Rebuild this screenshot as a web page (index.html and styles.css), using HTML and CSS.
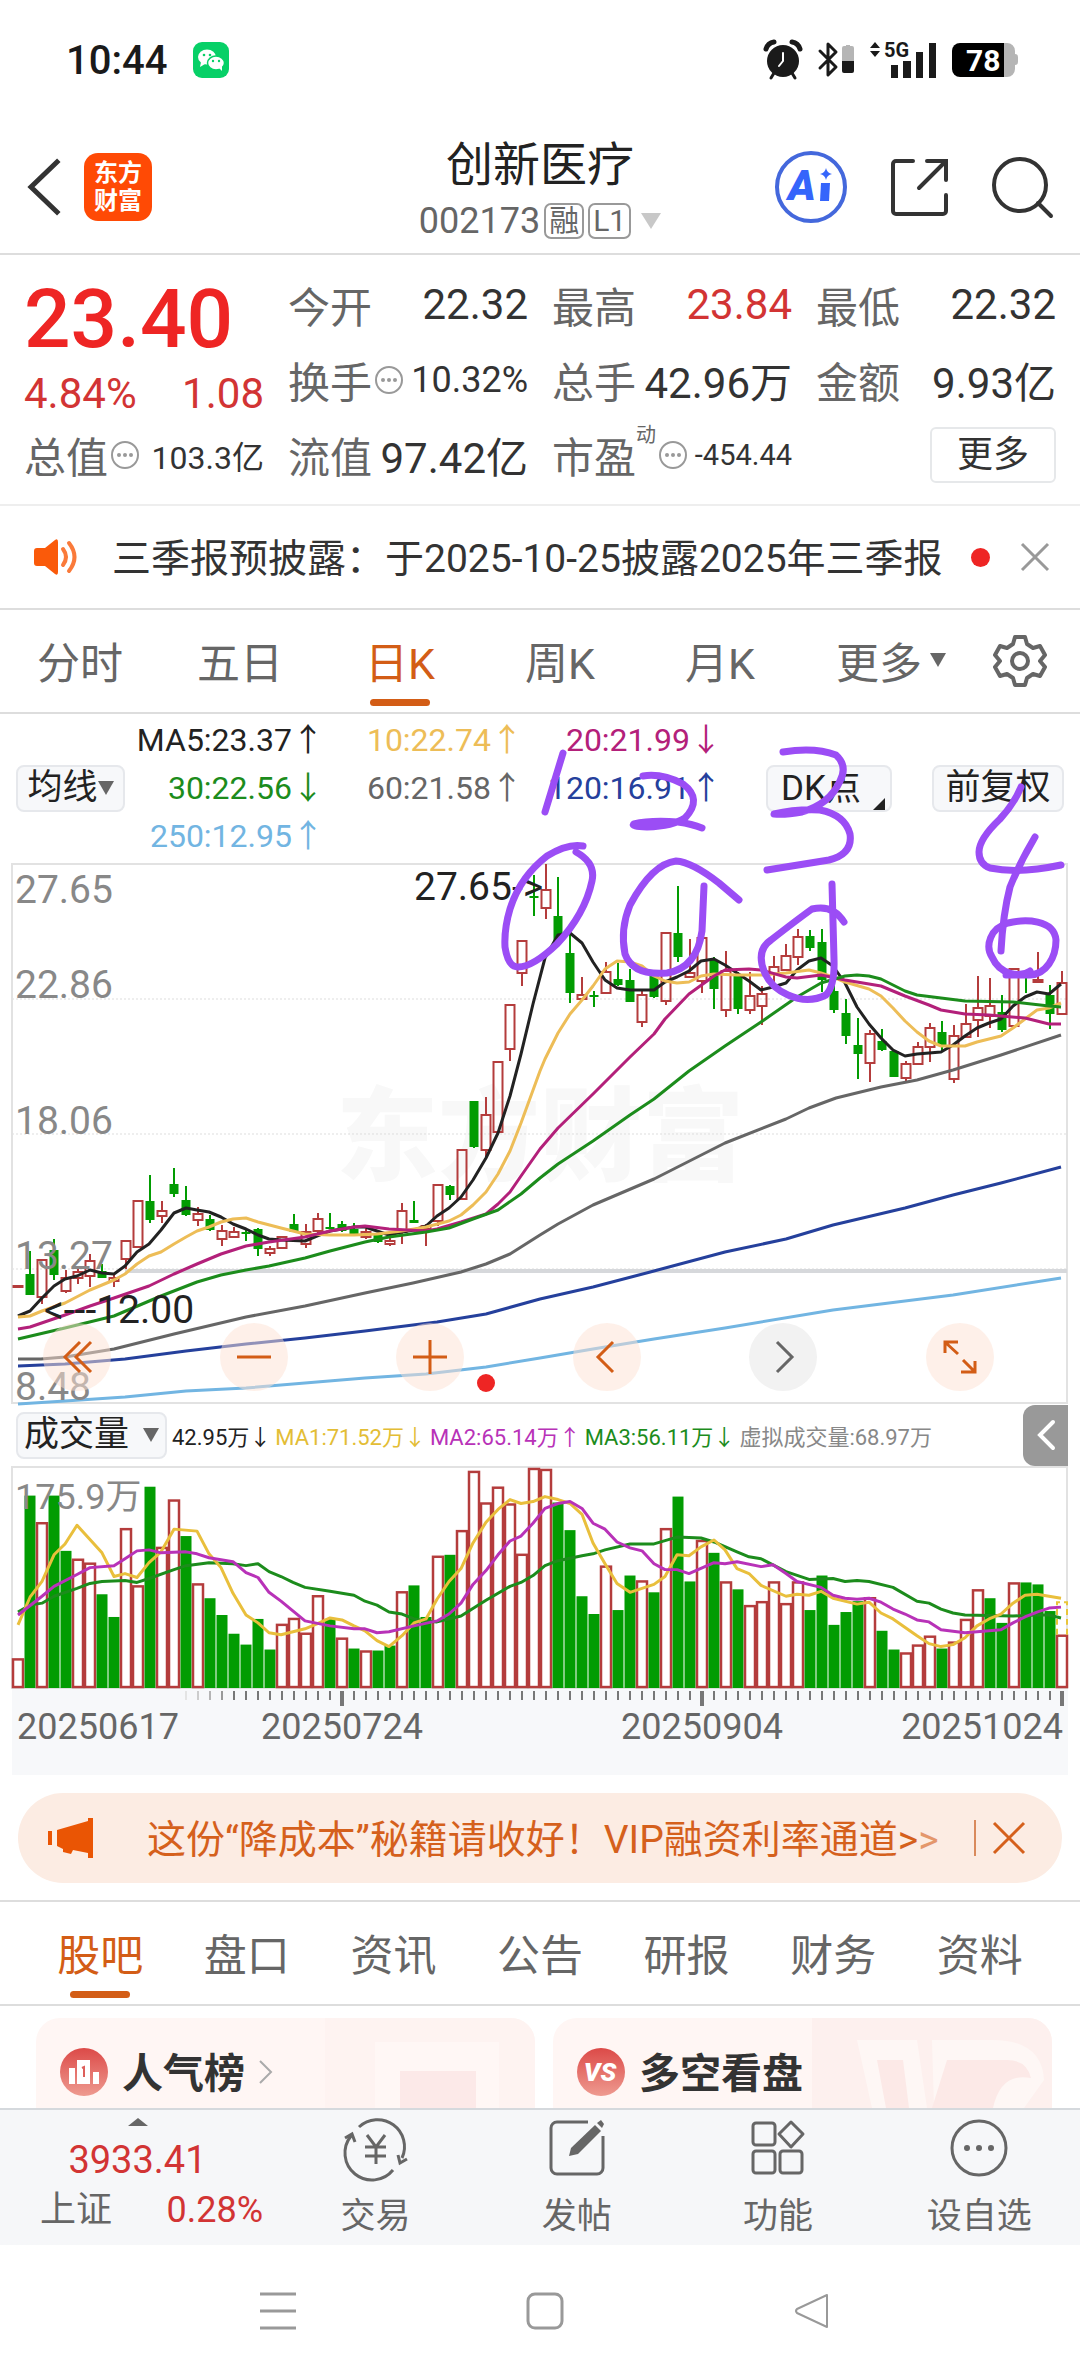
FILE: index.html
```html
<!DOCTYPE html>
<html lang="zh-CN">
<head>
    <meta charset="UTF-8">
    <meta name="viewport" content="width=device-width, initial-scale=1.0">
    <title>创新医疗 002173</title>
    <link rel="stylesheet" href="styles.css">
</head>
<body>

    <div class="status-bar">
        <span class="status-time">10:44</span>
        <svg class="wechat-icon" width="36" height="36" viewBox="0 0 36 36">
            <rect width="36" height="36" rx="9" fill="#07d067"/>
            <ellipse cx="14" cy="15" rx="9" ry="7.5" fill="#fff"/>
            <path d="M8 20l-1 5 5-3z" fill="#fff"/>
            <ellipse cx="23" cy="21" rx="8.5" ry="7" fill="#fff" stroke="#07d067" stroke-width="1.5"/>
            <path d="M26 26l3 3v-5z" fill="#fff"/>
            <g fill="#07d067"><circle cx="11" cy="13" r="1.3"/><circle cx="17" cy="13" r="1.3"/><circle cx="20" cy="19" r="1.2"/><circle cx="26" cy="19" r="1.2"/></g>
        </svg>
        <div class="status-icons">
            <svg width="38" height="40" viewBox="0 0 38 40">
                <circle cx="19" cy="21" r="16" fill="#1a1a1a"/>
                <path d="M2 9a10 10 0 0 1 8-7M36 9a10 10 0 0 0-8-7" stroke="#1a1a1a" stroke-width="5" fill="none" stroke-linecap="round"/>
                <path d="M10 33l-3 5M28 33l3 5" stroke="#1a1a1a" stroke-width="3" stroke-linecap="round"/>
                <path d="M19 13v8l-4 5" stroke="#fff" stroke-width="2" fill="none" stroke-linecap="round"/>
            </svg>
            <svg width="36" height="38" viewBox="0 0 36 38">
                <path d="M2 10l16 16-8 8V3l8 8L2 27" stroke="#1a1a1a" stroke-width="3" fill="none" stroke-linejoin="round" stroke-linecap="round"/>
                <path d="M24 7a2 2 0 0 1 2-2h2V4h4v1h2a2 2 0 0 1 2 2v13H24z" fill="#b5b5b5"/>
                <path d="M24 20h12v10a2 2 0 0 1-2 2h-8a2 2 0 0 1-2-2z" fill="#1a1a1a"/>
            </svg>
            <svg width="66" height="38" viewBox="0 0 66 38">
                <path d="M5 1l5 6H0zM5 16l5-6H0z" fill="#1a1a1a"/>
                <text x="14" y="16" class="net-label">5G</text>
                <path d="M21 24h7v13h-7zM33 20h8v17h-8zM46 11h7v26h-7zM59 2h7v35h-7z" fill="#1a1a1a"/>
            </svg>
            <svg width="66" height="34" viewBox="0 0 66 34">
                <path d="M52 0h3a8 8 0 0 1 8 8v3q3 0 3 3v5q0 3-3 3v4a8 8 0 0 1-8 8h-3z" fill="#b5b5b5"/>
                <path d="M8 0h44v34H8a8 8 0 0 1-8-8V8a8 8 0 0 1 8-8z"/>
                <text x="14" y="28" class="battery-label">78</text>
            </svg>
        </div>
    </div>

    <header class="header">
        <div class="header-left">
            <button class="icon-btn" aria-label="返回">
                <svg width="34" height="56" viewBox="0 0 34 56"><path d="M31 3L5 28l26 25" fill="none" stroke="#333" stroke-width="5" stroke-linecap="square"/></svg>
            </button>
            <div class="logo"><span>东方</span><span>财富</span></div>
        </div>
        <div class="stock-title">
            <h1>创新医疗</h1>
            <div class="stock-code">
                <span>002173</span><span class="badge">融</span><span class="badge">L1</span>
                <svg class="code-caret" width="20" height="16" viewBox="0 0 20 16"><path d="M0 0h20L10 16z" fill="#c8c8c8"/></svg>
            </div>
        </div>
        <div class="header-right">
            <button class="icon-btn" aria-label="AI">
                <svg width="74" height="74" viewBox="0 0 74 74">
                    <circle cx="37" cy="37" r="34" fill="none" stroke="#4468dc" stroke-width="4"/>
                    <text x="14" y="50" class="ai-label">A</text>
                    <path d="M47 33h9l-1 18h-9z" fill="#3565fb"/>
                    <path d="M52 18q1 5 6 6-5 1-6 6-1-5-6-6 5-1 6-6z" fill="#3565fb"/>
                </svg>
            </button>
            <button class="icon-btn" aria-label="分享">
                <svg width="60" height="60" viewBox="0 0 60 60">
                    <path d="M23 4H6a3 3 0 0 0-3 3v47a3 3 0 0 0 3 3h47a3 3 0 0 0 3-3V38M37 4h19v19M55 5L29 31" fill="none" stroke="#333" stroke-width="4" stroke-linecap="round"/>
                </svg>
            </button>
            <button class="icon-btn" aria-label="搜索">
                <svg width="62" height="62" viewBox="0 0 62 62">
                    <circle cx="28" cy="29" r="26" fill="none" stroke="#333" stroke-width="4"/>
                    <path d="M46 47l13 13" stroke="#333" stroke-width="4" stroke-linecap="round"/>
                </svg>
            </button>
        </div>
    </header>

    <section class="quote">
        <div class="price-box">
            <div class="price">23.40</div>
            <div class="change"><span>4.84%</span><span>1.08</span></div>
        </div>
        <div class="cell"><span class="label">今开</span><span class="value">22.32</span></div>
        <div class="cell"><span class="label">最高</span><span class="value up">23.84</span></div>
        <div class="cell"><span class="label">最低</span><span class="value">22.32</span></div>
        <div class="cell"><span class="label">换手</span><svg class="tip" viewBox="0 0 30 30"><use href="#tip"/></svg><span class="value mid">10.32%</span></div>
        <div class="cell"><span class="label">总手</span><span class="value">42.96万</span></div>
        <div class="cell"><span class="label">金额</span><span class="value">9.93亿</span></div>
        <div class="cell"><span class="label">总值</span><svg class="tip" viewBox="0 0 30 30"><use href="#tip"/></svg><span class="value small">103.3亿</span></div>
        <div class="cell"><span class="label">流值</span><span class="value">97.42亿</span></div>
        <div class="cell"><span class="label">市盈</span><sup>动</sup><svg class="tip" viewBox="0 0 30 30"><use href="#tip"/></svg><span class="value tiny">-454.44</span></div>
        <div class="cell"><button class="more-btn">更多</button></div>
    </section>

    <div class="notice">
        <svg width="46" height="38" viewBox="0 0 46 38">
            <path d="M3 10h8L21 2q3-2 3 2v30q0 4-3 2L11 28H3q-3 0-3-3V13q0-3 3-3z" fill="#fa5a0a"/>
            <path d="M29 11q6 8 0 16M35 5q11 14 0 28" fill="none" stroke="#fa7a3a" stroke-width="4" stroke-linecap="round"/>
        </svg>
        <a href="#" class="notice-text">三季报预披露：于2025-10-25披露2025年三季报</a>
        <span class="dot"></span>
        <button class="icon-btn" aria-label="关闭公告">
            <svg width="30" height="30" viewBox="0 0 30 30"><path d="M2 2l26 26M28 2L2 28" stroke="#999" stroke-width="3"/></svg>
        </button>
    </div>

    <nav class="tabs period-tabs">
        <button class="tab">分时</button>
        <button class="tab">五日</button>
        <button class="tab active">日K</button>
        <button class="tab">周K</button>
        <button class="tab">月K</button>
        <button class="tab more-tab">更多<svg width="16" height="14" viewBox="0 0 16 14"><path d="M0 0h16L8 14z" fill="#666"/></svg></button>
        <button class="icon-btn setting-btn" aria-label="设置">
            <svg width="54" height="54" viewBox="0 0 54 54" fill="none" stroke="#666" stroke-width="4" stroke-linejoin="round">
                <path d="M22 3h10l2 7 6 4 7-2 5 9-5 6 5 6-5 9-7-2-6 4-2 7H22l-2-7-6-4-7 2-5-9 5-6-5-6 5-9 7 2 6-4z"/>
                <circle cx="27" cy="27" r="8"/>
            </svg>
        </button>
    </nav>

    <section class="chart">
        <div class="legend">
            <button class="chip ma-chip">均线<svg width="16" height="14" viewBox="0 0 16 14"><path d="M0 0h16L8 14z" fill="#666"/></svg></button>
            <div class="ma-list">
                <span class="ma5">MA5:23.37↑</span><span class="ma10">10:22.74↑</span><span class="ma20">20:21.99↓</span>
                <span class="ma30">30:22.56↓</span><span class="ma60">60:21.58↑</span><span class="ma120">120:16.91↑</span>
                <span class="ma250">250:12.95↑</span>
            </div>
            <button class="chip dk-chip">DK点<svg width="12" height="12" viewBox="0 0 12 12"><path d="M12 0v12H0z" fill="#222"/></svg></button>
            <button class="chip adjust-chip">前复权</button>
        </div>

        <div class="price-chart">
            <svg class="plot" id="priceChart" viewBox="0 0 1080 542">
                <text x="540" y="311" class="watermark">东方财富</text>
                <path d="M12 137h1055M12 272h1055M12 407h1055" class="grid-line"/>
                <path d="M12 2h1055v539H12z" class="frame"/>
                <path d="M125 409h942" class="base-line"/>
                <g id="candles"></g>
                <g id="maLines"></g>
                <g class="axis-label">
                    <text x="15" y="41">27.65</text>
                    <text x="15" y="136">22.86</text>
                    <text x="15" y="272">18.06</text>
                    <text x="15" y="407">13.27</text>
                    <text x="15" y="538">8.48</text>
                </g>
                <text x="414" y="38" class="mark-label">27.65-&gt;</text>
                <text x="44" y="461" class="mark-label">&lt;---12.00</text>
                <circle cx="486" cy="521" r="9" fill="#ee2524"/>
            </svg>
            <div class="chart-tools">
                <button class="tool-btn" aria-label="最左"><svg width="34" height="34" viewBox="0 0 34 34"><path d="M20 2L5 17l15 15M31 2L16 17l15 15"/></svg></button>
                <button class="tool-btn" aria-label="缩小"><svg width="34" height="34" viewBox="0 0 34 34"><path d="M0 17h34"/></svg></button>
                <button class="tool-btn" aria-label="放大"><svg width="34" height="34" viewBox="0 0 34 34"><path d="M0 17h34M17 0v34"/></svg></button>
                <button class="tool-btn" aria-label="向左"><svg width="34" height="34" viewBox="0 0 34 34"><path d="M23 2L8 17l15 15"/></svg></button>
                <button class="tool-btn disabled" aria-label="向右"><svg width="34" height="34" viewBox="0 0 34 34"><path d="M11 2l15 15-15 15"/></svg></button>
                <button class="tool-btn" aria-label="全屏"><svg width="34" height="34" viewBox="0 0 34 34"><path d="M2 13V2h13M3 3l12 11M32 21v11H18M31 31L20 20"/></svg></button>
            </div>
        </div>

        <!-- hand-drawn marks on the four peaks -->
        <svg class="ink" viewBox="0 0 1080 300">
            <path d="M563 39L545 98"/>
            <path d="M643 62Q662 59 683 70Q703 85 685 104Q673 112 647 113Q630 112 634 110Q650 106 678 108Q692 110 702 114"/>
            <path d="M783 38Q815 33 836 41Q848 52 840 67Q830 90 802 98Q785 101 774 100Q795 95 820 96Q845 101 850 120Q853 140 829 146Q798 151 767 156"/>
            <path d="M1021 73Q1014 90 1000 105Q979 125 979 138Q979 150 990 154Q1019 160 1061 151"/>
            <path d="M1035 123Q1020 148 1010 173Q1003 200 1001 237"/>
            <path d="M1006 261H1030M1030 261C1046 260 1056 244 1056 226C1054 205 1025 205 1008 209C990 214 985 232 992 243C1000 261 1020 264 1030 257"/>
            <path d="M583 132Q568 129 547 142Q520 163 510 195Q504 215 505 233Q508 253 518 253Q533 253 557 230Q585 200 592 167Q596 149 576 138"/>
            <path d="M739 186L719 169Q692 148 676 147Q652 150 630 191Q620 215 625 240Q633 262 667 259Q697 254 702 217L704 172"/>
            <path d="M844 208Q833 190 812 195Q798 205 771 226Q756 236 764 257Q770 273 788 281Q808 290 826 281Q835 272 834 245L832 170"/>
        </svg>

        <div class="volume-bar">
            <button class="chip volume-chip">成交量<svg width="16" height="14" viewBox="0 0 16 14"><path d="M0 0h16L8 14z" fill="#666"/></svg></button>
            <div class="volume-list">
                <span class="ma5">42.95万↓</span><span class="vol1">MA1:71.52万↓</span><span class="vol2">MA2:65.14万↑</span><span class="vol3">MA3:56.11万↓</span><span class="virtual">虚拟成交量:68.97万</span>
            </div>
            <button class="side-btn" aria-label="展开"><svg width="20" height="32" viewBox="0 0 20 32"><path d="M17 3L4 16l13 13" fill="none" stroke="#fff" stroke-width="4" stroke-linecap="round"/></svg></button>
        </div>

        <svg class="plot volume-plot" viewBox="0 0 1080 226" preserveAspectRatio="none">
            <path d="M12 1h1055v224H12z" class="frame"/>
            <g id="volumes"></g>
            <path d="M1057 171v-33h10v33" fill="none" stroke="#e9c53a" stroke-width="2" stroke-dasharray="6 4"/>
            <g id="volLines"></g>
            <text x="15" y="44" class="volume-label">175.9万</text>
        </svg>

        <svg class="plot" viewBox="0 0 1080 86">
            <rect x="12" width="1056" height="86" fill="#f7f8fa"/>
            <g id="ticks"></g>
            <g class="date-label">
                <text x="17" y="50">20250617</text>
                <text x="342" y="50" text-anchor="middle">20250724</text>
                <text x="702" y="50" text-anchor="middle">20250904</text>
                <text x="1063" y="50" text-anchor="end">20251024</text>
            </g>
        </svg>
    </section>

    <div class="promo">
        <svg width="48" height="42" viewBox="0 0 48 42" fill="#ea5504">
            <path d="M1 14h4v14H1zM10 13L41 4V1h5v40h-5v-5l-15-3-2 4-8-2v-3l-6-3z"/>
        </svg>
        <a href="#" class="promo-text">这份“降成本”秘籍请收好！VIP融资利率通道&gt;<span>&gt;</span></a>
        <span class="promo-line"></span>
        <button class="icon-btn" aria-label="关闭广告">
            <svg width="34" height="34" viewBox="0 0 34 34"><path d="M2 2l30 30M32 2L2 32" stroke="#d5601c" stroke-width="3"/></svg>
        </button>
    </div>

    <nav class="tabs info-tabs">
        <button class="tab active">股吧</button>
        <button class="tab">盘口</button>
        <button class="tab">资讯</button>
        <button class="tab">公告</button>
        <button class="tab">研报</button>
        <button class="tab">财务</button>
        <button class="tab">资料</button>
    </nav>

    <section class="cards">
        <a href="#" class="card">
            <svg class="card-art" width="240" height="90" viewBox="0 0 240 90">
                <path d="M30 0h210v90H30z" fill="#fef3f1"/><path d="M80 24h124v66H80z" fill="#fff7f5"/><path d="M105 53h76v37h-76z" fill="#fce9e8"/>
            </svg>
            <svg class="card-icon" width="48" height="48" viewBox="0 0 48 48">
                <circle cx="24" cy="24" r="24" fill="url(#redFade)"/>
                <path d="M9 20h6v16H9zM17 12h13v24H17zM33 24h6v12h-6z" fill="#fff"/><path d="M22 20l2-1v10" stroke="#dd5f5a" stroke-width="2" fill="none"/>
            </svg>
            <span class="card-name">人气榜</span>
            <svg width="14" height="24" viewBox="0 0 14 24"><path d="M1 1l11 11L1 23" fill="none" stroke="#aaa" stroke-width="2"/></svg>
        </a>
        <a href="#" class="card">
            <svg class="card-art" width="240" height="90" viewBox="0 0 240 90">
                <path d="M0 0h240v90H0z" fill="#fdf0ee"/><path d="M45 22h60l10 68H60zM120 22h60q50 0 52 40l-20 28h-90z" fill="#fef7f5"/>
                <path d="M65 42h26l6 48H74zM120 90l15-48h60q20 0 24 18-30-6-38 30z" fill="#fce9e7"/>
            </svg>
            <svg class="card-icon" width="48" height="48" viewBox="0 0 48 48">
                <circle cx="24" cy="24" r="24" fill="url(#redFade)"/>
                <text x="23" y="33" class="vs-label">VS</text>
            </svg>
            <span class="card-name">多空看盘</span>
        </a>
    </section>

    <footer class="bottom-bar">
        <a href="#" class="index-box">
            <svg class="index-caret" width="20" height="8" viewBox="0 0 20 8"><path d="M10 0l10 8H0z" fill="#666"/></svg>
            <span class="index-value">3933.41</span>
            <span class="index-row"><span>上证</span><span class="up">0.28%</span></span>
        </a>
        <button class="bar-btn">
            <svg width="66" height="60" viewBox="0 0 66 60" fill="none" stroke="#666" stroke-width="3">
                <path d="M16 9a27 27 0 0 1 43 31M50 52A27 27 0 0 1 8 18M2 20l7-4 3 8M64 41l-7 4-2-8"/>
                <path d="M24 17l9 12 9-12M22 29h21M22 38h21M33 29v17"/>
            </svg>
            <span>交易</span>
        </button>
        <button class="bar-btn">
            <svg width="60" height="60" viewBox="0 0 60 60" fill="none" stroke="#666" stroke-width="3">
                <path d="M41 4H10a6 6 0 0 0-6 6v40a6 6 0 0 0 6 6h40a6 6 0 0 0 6-6V18"/>
                <path d="M22 38l2-8 24-23 6 6-23 23z" fill="#666" stroke="none"/><path d="M50 5l4-3 3 4-2 4z" fill="#666" stroke="none"/>
            </svg>
            <span>发帖</span>
        </button>
        <button class="bar-btn">
            <svg width="56" height="60" viewBox="0 0 56 60" fill="none" stroke="#666" stroke-width="3">
                <rect x="3" y="5" width="22" height="22" rx="3"/><rect x="3" y="33" width="22" height="22" rx="3"/><rect x="30" y="33" width="22" height="22" rx="3"/>
                <path d="M41 4l12 12-12 13-12-13z" stroke-linejoin="round"/>
            </svg>
            <span>功能</span>
        </button>
        <button class="bar-btn">
            <svg width="60" height="60" viewBox="0 0 60 60">
                <circle cx="30" cy="30" r="27" fill="none" stroke="#666" stroke-width="3"/>
                <g fill="#666"><circle cx="18" cy="30" r="3"/><circle cx="30" cy="30" r="3"/><circle cx="42" cy="30" r="3"/></g>
            </svg>
            <span>设自选</span>
        </button>
    </footer>

    <div class="system-nav">
        <button class="icon-btn" aria-label="菜单"><svg width="38" height="38" viewBox="0 0 38 38"><path d="M1 2h36M1 19h36M1 36h36" stroke="#999" stroke-width="3"/></svg></button>
        <button class="icon-btn" aria-label="主页"><svg width="38" height="38" viewBox="0 0 38 38"><rect x="2" y="2" width="34" height="34" rx="7" fill="none" stroke="#999" stroke-width="3"/></svg></button>
        <button class="icon-btn" aria-label="后退"><svg width="38" height="38" viewBox="0 0 38 38"><path d="M34 3v32L4 21q-2-2 0-4z" fill="none" stroke="#999" stroke-width="2" stroke-linejoin="round"/></svg></button>
    </div>

    <!-- shared symbols -->
    <svg class="defs" width="0" height="0">
        <symbol id="tip" viewBox="0 0 30 30">
            <circle cx="15" cy="15" r="13" fill="none" stroke="#999" stroke-width="2"/>
            <g fill="#999"><circle cx="9" cy="15" r="2"/><circle cx="15" cy="15" r="2"/><circle cx="21" cy="15" r="2"/></g>
        </symbol>
        <linearGradient id="redFade" x1="0" y1="0" x2="0" y2="1"><stop offset="0" stop-color="#dc4a48"/><stop offset="1" stop-color="#ee9a90"/></linearGradient>
    </svg>

    <script src="script.js"></script>
</body>
</html>
```
FILE: styles.css
```css
* {
    box-sizing: border-box;
}

body {
    margin: 0;
    background-color: #fff;
    color: #333;
    font-family: Roboto, "Noto Sans CJK SC", sans-serif;
    font-size: 36px;
}

button {
    padding: 0;
    border: none;
    background: none;
    color: inherit;
    font-family: inherit;
    cursor: pointer;
}

a {
    color: inherit;
    text-decoration: none;
}

svg {
    display: block;
    flex-shrink: 0;
    overflow: visible;
}

/* Phone status bar */
.status-bar {
    display: flex;
    align-items: center;
    height: 120px;
    padding: 0 62px 0 66px;
}

.status-time {
    font-size: 40px;
    font-weight: 500;
    color: #1a1a1a;
}

.wechat-icon {
    margin-left: 26px;
}

.status-icons {
    display: flex;
    align-items: center;
    gap: 16px;
    margin-left: auto;
}

.net-label {
    font-size: 20px;
    font-weight: 700;
    fill: #1a1a1a;
}

.battery-label {
    font-size: 30px;
    font-weight: 700;
    fill: #fff;
}

/* Header */
.header {
    display: grid;
    grid-template-columns: 1fr auto 1fr;
    align-items: center;
    height: 135px;
    padding: 0 26px;
    border-bottom: 2px solid #ddd;
}

.header-left,
.header-right {
    display: flex;
    align-items: center;
    gap: 24px;
}

.header-right {
    justify-content: flex-end;
    gap: 42px;
}

.logo {
    display: flex;
    flex-direction: column;
    align-items: center;
    justify-content: center;
    width: 68px;
    height: 68px;
    border-radius: 14px;
    background-color: #ff4a05;
    color: #fff;
    font-size: 24px;
    font-weight: 700;
    line-height: 28px;
}

.stock-title {
    padding-top: 8px;
    text-align: center;
}

.stock-title h1 {
    margin: 0;
    font-size: 47px;
    font-weight: 400;
    line-height: 60px;
    color: #222;
}

.stock-code {
    display: flex;
    align-items: center;
    justify-content: center;
    gap: 4px;
    height: 52px;
    font-size: 36px;
    color: #666;
}

.badge {
    height: 36px;
    padding: 0 3px;
    border: 2px solid #999;
    border-radius: 7px;
    font-size: 30px;
    line-height: 32px;
}

.code-caret {
    margin-left: 6px;
}

.ai-label {
    font-size: 42px;
    font-weight: 900;
    font-style: italic;
    fill: #3565fb;
}

/* Quote numbers */
.quote {
    display: grid;
    grid-template-columns: repeat(4, 1fr);
    grid-auto-rows: 75px;
    column-gap: 24px;
    padding: 12px 24px 12px;
    border-bottom: 2px solid #eee;
}

.price-box {
    grid-row: span 2;
    padding-top: 3px;
    color: #ee2524;
}

.price {
    font-size: 82px;
    font-weight: 500;
    line-height: 98px;
}

.change {
    display: flex;
    justify-content: space-between;
    font-size: 42px;
    line-height: 52px;
    color: #d23434;
}

.cell {
    display: flex;
    align-items: center;
    white-space: nowrap;
}

.label {
    font-size: 42px;
    color: #666;
}

.cell sup {
    align-self: flex-start;
    font-size: 20px;
    line-height: 36px;
    color: #666;
}

.tip {
    width: 30px;
    height: 30px;
    margin-left: 2px;
}

.value {
    margin-left: auto;
    font-size: 42px;
}

.value.mid {
    font-size: 36px;
}

.value.small {
    font-size: 32px;
}

.value.tiny {
    font-size: 29px;
}

.up {
    color: #d23434;
}

.more-btn {
    width: 126px;
    height: 56px;
    margin-left: auto;
    border: 2px solid #e6e8ea;
    border-radius: 6px;
    font-size: 36px;
    line-height: 48px;
}

/* Notice line */
.notice {
    display: flex;
    align-items: center;
    height: 104px;
    padding: 0 30px 0 34px;
    border-bottom: 2px solid #ddd;
}

.notice-text {
    margin-left: 32px;
    padding-bottom: 4px;
    font-size: 39px;
    white-space: nowrap;
}

.dot {
    width: 19px;
    height: 19px;
    margin: 0 30px 0 auto;
    border-radius: 50%;
    background-color: #ee2524;
}

/* Tabs */
.tabs {
    display: flex;
    height: 104px;
    border-bottom: 2px solid #ddd;
}

.tab {
    position: relative;
    display: flex;
    flex: 1;
    align-items: center;
    justify-content: center;
    gap: 8px;
    padding-bottom: 2px;
    font-size: 43px;
    color: #666;
}

.tab.active {
    color: #d35d16;
}

.tab.active::after {
    content: "";
    position: absolute;
    bottom: 6px;
    left: calc(50% - 30px);
    width: 60px;
    height: 7px;
    border-radius: 4px;
    background-color: #d35d16;
}

.period-tabs {
    display: grid;
    grid-template-columns: repeat(5, 4fr) 4fr 3fr;
}

.more-tab {
    justify-content: flex-end;
    padding-right: 14px;
}

.setting-btn {
    display: flex;
    align-items: center;
    justify-content: center;
}

/* Chart */
.chart {
    position: relative;
}

.legend {
    display: flex;
    align-items: center;
    height: 148px;
    padding: 0 16px;
}

.chip {
    display: flex;
    align-items: center;
    justify-content: center;
    height: 47px;
    padding: 0 8px;
    border: 2px solid #e6e8ec;
    border-radius: 8px;
    background-color: #f7f8fa;
    color: #222;
    font-size: 35px;
    line-height: 42px;
    white-space: nowrap;
}

.ma-chip {
    width: 109px;
}

.dk-chip {
    align-items: flex-end;
    gap: 12px;
    width: 126px;
    margin: 0 40px 0 auto;
    padding: 0 4px 0 12px;
}

.adjust-chip {
    width: 132px;
}

.ma-list {
    display: grid;
    grid-template-columns: repeat(3, 199px);
    grid-auto-rows: 48px;
    text-align: right;
    font-size: 32px;
    line-height: 48px;
    white-space: nowrap;
}

.ma5 { color: #222; }
.ma10 { color: #edbd57; }
.ma20 { color: #b3207a; }
.ma30 { color: #1c8c1c; }
.ma60 { color: #666; }
.ma120 { color: #25409c; }
.ma250 { color: #72b5e2; }

.price-chart {
    position: relative;
}

.plot {
    width: 100%;
}

.volume-plot {
    aspect-ratio: 1080 / 223;
}

.frame {
    fill: none;
    stroke: #e2e2e2;
    stroke-width: 2;
}

.grid-line {
    stroke: #ddd;
    stroke-dasharray: 2 2;
}

.base-line {
    stroke: #d6d8db;
    stroke-width: 4;
}

.watermark {
    font-size: 102px;
    font-weight: 900;
    text-anchor: middle;
    fill: #f8f8f8;
}

.axis-label {
    font-size: 39px;
    fill: #888;
}

.mark-label {
    font-size: 39px;
    fill: #222;
}

.volume-label,
.date-label {
    font-size: 36px;
    fill: #666;
}

.volume-label {
    fill: #888;
}

.chart-tools {
    position: absolute;
    bottom: 13px;
    left: 4%;
    right: 8%;
    display: flex;
    justify-content: space-between;
}

.tool-btn {
    display: flex;
    align-items: center;
    justify-content: center;
    width: 68px;
    height: 68px;
    border-radius: 50%;
    background-color: rgba(253, 226, 212, 0.5);
}

.tool-btn.disabled {
    background-color: #f2f2f2;
}

.tool-btn path {
    fill: none;
    stroke: #d35d16;
    stroke-width: 3;
}

.tool-btn.disabled path {
    stroke: #666;
}

.ink {
    position: absolute;
    top: 0;
    left: 0;
    width: 100%;
    pointer-events: none;
    fill: none;
    stroke: #9b4df5;
    stroke-width: 7;
    stroke-linecap: round;
    stroke-linejoin: round;
}

.volume-bar {
    display: flex;
    align-items: center;
    height: 62px;
    padding: 0 12px 0 16px;
}

.volume-chip {
    gap: 14px;
    width: 151px;
}

.volume-list {
    display: flex;
    gap: 4px;
    margin-left: 5px;
    font-size: 22px;
    white-space: nowrap;
}

.vol1 { color: #e3bd35; }
.vol2 { color: #b832b8; }
.vol3 { color: #1c8c1c; }
.virtual { color: #888; }

.side-btn {
    display: flex;
    align-items: center;
    justify-content: center;
    width: 45px;
    height: 61px;
    margin-left: auto;
    border-radius: 12px 0 0 12px;
    background-color: #999;
}

/* Promo */
.promo {
    display: flex;
    align-items: center;
    height: 90px;
    margin: 18px 18px 17px;
    padding: 0 36px 0 29px;
    border-radius: 45px;
    background-color: #fcece3;
    color: #d5601c;
}

.promo-text {
    margin-left: 52px;
    padding-bottom: 4px;
    font-size: 39px;
    white-space: nowrap;
}

.promo-text span {
    opacity: 0.6;
}

.promo-line {
    width: 2px;
    height: 36px;
    margin: 0 16px 0 auto;
    background-color: #d98a5c;
}

.info-tabs {
    padding: 0 27px;
    border-top: 2px solid #ddd;
    height: 106px;
}

/* Cards */
.cards {
    display: grid;
    grid-template-columns: 1fr 1fr;
    gap: 18px;
    padding: 12px 28px 0 36px;
}

.card {
    position: relative;
    display: flex;
    align-items: center;
    gap: 14px;
    height: 90px;
    padding: 18px 24px 0;
    border-radius: 24px 24px 0 0;
    background-color: #fff6f4;
    overflow: hidden;
    font-size: 41px;
    font-weight: 700;
}

.card-art {
    position: absolute;
    top: 0;
    right: 0;
}

.card-icon {
    position: relative;
}

.card-name {
    padding-bottom: 4px;
}

.vs-label {
    font-size: 26px;
    font-weight: 900;
    font-style: italic;
    text-anchor: middle;
    fill: #fff;
}

/* Bottom bar */
.bottom-bar {
    display: grid;
    grid-template-columns: 275px repeat(4, 1fr);
    height: 137px;
    border-top: 2px solid #d5d9dd;
    background-color: #f6f7f9;
    color: #666;
}

.index-box {
    display: flex;
    flex-direction: column;
    align-items: center;
    padding-top: 8px;
}

.index-value {
    margin-top: 8px;
    font-size: 38px;
    line-height: 52px;
    color: #d23434;
}

.index-row {
    display: flex;
    justify-content: space-between;
    width: 100%;
    padding: 0 12px 0 40px;
    font-size: 36px;
    line-height: 48px;
}

.bar-btn {
    display: flex;
    flex-direction: column;
    align-items: center;
    padding-top: 8px;
    font-size: 35px;
}

.bar-btn span {
    margin-top: 14px;
    line-height: 50px;
}

.system-nav {
    display: flex;
    align-items: center;
    justify-content: center;
    gap: 229px;
    height: 131px;
    padding-left: 10px;
}

.defs {
    position: absolute;
}
```
FILE: script.js
```js
const STEP = 12;
const FIRST_X = 18;
const RED = '#b43c3c';
const GREEN = '#029c02';

// type, high, body top, body bottom, low (chart units)
const candles = `r 424 424 424 424|g 389 412 433 433|r 398 398 435 442|g 377 388 413 418|r 408 416 429 431|r 406 410 416 422
r 392 399 414 425|g 402 409 416 416|r 413 416 419 425|r 379 379 397 407|r 339 339 385 386|g 313 339 358 361
r 339 349 354 361|g 306 322 332 335|g 324 338 353 354|r 345 352 358 364|g 353 357 368 369|r 363 369 377 384
r 365 370 375 375|g 367 370 372 379|g 366 367 387 394|r 384 387 391 394|r 375 375 386 386|g 352 362 370 370
r 362 370 382 386|r 351 357 369 375|g 351 365 367 367|g 359 362 369 370|g 361 367 372 373|r 367 370 375 377
g 371 372 380 381|r 376 379 382 384|r 341 349 370 382|g 339 358 361 361|r 362 364 367 384|r 323 323 359 364
g 323 324 333 338|r 288 288 337 337|g 239 239 285 286|r 235 253 288 296|r 200 200 270 270|r 143 143 187 199
r 79 79 111 124|g 13 34 36 54|r 2 28 46 57|g 15 54 79 79|g 65 91 131 141|r 115 133 137 138
g 129 133 135 145|r 100 110 131 132|g 101 117 123 124|g 107 118 140 140|r 129 133 160 165|g 109 110 135 136
r 71 71 139 143|g 24 71 95 100|r 77 111 115 116|r 76 76 119 131|g 95 98 127 147|r 89 109 148 155
g 110 113 147 152|r 110 134 148 152|r 124 132 144 163|r 94 105 112 127|r 82 94 108 108|r 67 75 95 103
g 68 74 86 89|g 67 80 118 130|g 122 129 148 151|g 137 151 174 182|g 156 183 192 217|r 168 172 201 220
g 167 179 188 189|g 189 189 215 215|r 199 202 216 220|r 180 185 202 203|r 161 166 185 200|g 159 170 184 190
r 163 174 217 221|r 142 162 175 176|r 114 146 158 175|r 116 144 154 166|g 133 150 168 170|r 107 107 164 164
g 108 110 112 131|r 90 118 120 120|g 123 133 152 167|r 109 121 152 153`.split(/[|\n]/);

// colour and top of each volume bar
const volumes = `r195 g30 r57 g30 g86 r94 r98 g130 g153 r63 r121 g21 r82 r34 g71 r119 g134 g151 g170 g181 g155 g186
r160 r154 r169 r131 g155 r174 g185 r187 g187 g182 r127 g121 g153 r91 g90 r65 r5 r37 r21 r38 r89 r2
r3 g37 g65 g132 g150 r101 g146 g111 r116 g128 r63 g31 g117 r75 g88 r117 g125 r141 r137 r117 r139 r117
g146 g111 g161 g148 g137 r133 g167 g186 r189 r181 r172 g185 r178 r155 r125 g134 g159 r118 g118 g120 g147 r171`.split(/\s+/);

const maLines = [
    ['#72b5e2', '18,542 65,539 125,535 186,529 246,526 365,516 426,512 486,505 540,496 593,487 654,477 725,466 833,448 953,433 1061,416'],
    ['#25409c', '18,504 65,502 125,497 186,489 246,482 305,476 365,469 437,460 486,452 540,437 593,425 654,409 725,390 786,377 833,363 905,346 953,333 1001,321 1061,305'],
    ['#666', '18,497 41,497 65,495 114,487 174,472 246,455 305,444 365,431 413,421 461,410 486,402 510,392 540,373 558,362 593,343 654,317 725,281 786,257 809,246 836,236 881,225 917,218 953,208 1001,193 1061,173'],
    ['#222', '18,454 30,449 42,436 54,424 65,417 77,414 90,408 102,411 114,412 125,404 137,390 149,382 161,368 174,351 186,346 197,348 209,350 221,355 233,362 246,367 258,373 269,377 281,378 305,379 317,374 330,369 354,365 365,365 377,369 389,373 402,370 414,368 426,364 437,354 449,346 461,335 473,318 486,296 498,271 510,234 521,192 533,142 545,96 558,73 570,71 582,81 593,100 605,118 617,126 630,128 654,128 665,120 677,115 689,109 701,99 714,97 725,103 737,111 749,119 761,128 773,125 786,121 797,108 809,99 821,96 833,104 845,121 857,145 869,162 881,176 893,188 905,194 917,192 941,190 953,183 965,174 977,166 989,161 1001,157 1013,144 1025,135 1037,130 1049,132 1061,122'],
    ['#edbd57', '18,455 30,454 42,449 65,441 90,428 114,418 125,412 137,402 149,394 161,390 174,382 186,375 197,369 209,365 221,360 233,357 246,356 258,360 281,366 305,372 330,373 354,373 377,372 402,369 426,365 449,359 461,353 473,343 486,330 498,312 510,289 521,261 540,209 545,197 558,171 570,152 582,138 593,124 605,107 617,99 630,100 642,104 654,114 665,119 677,121 689,120 701,114 714,112 737,113 761,113 786,111 809,108 821,111 833,115 845,120 869,127 881,134 893,146 905,159 917,170 929,179 941,184 965,184 977,180 1001,174 1013,166 1025,157 1037,148 1049,146 1061,141'],
    ['#b3207a', '18,467 30,465 65,453 90,444 114,436 149,424 174,412 197,402 221,392 246,384 269,380 305,375 330,369 354,365 365,364 389,367 426,369 437,367 461,360 486,352 498,342 510,330 521,314 540,287 558,266 593,232 630,195 654,172 665,157 689,132 714,114 725,108 749,107 761,108 786,115 797,116 821,113 845,118 881,124 905,134 929,143 941,148 965,152 989,153 1025,156 1049,162 1061,162'],
    ['#1c8c1c', '18,477 65,466 114,454 161,434 197,420 221,413 246,408 269,404 305,396 330,389 365,380 389,375 426,370 449,366 473,357 498,348 521,332 540,316 558,302 593,279 630,253 654,237 689,209 725,184 761,160 797,135 821,121 845,114 857,113 869,114 881,117 905,129 917,133 941,136 965,139 1013,140 1049,144 1061,145']
];

const volLines = [
    ['#1c8c1c', '18,148 30,141 42,139 54,132 77,124 90,119 102,117 125,116 137,118 149,114 174,105 186,101 209,98 233,99 246,101 258,99 269,107 281,112 293,118 305,123 330,127 354,131 365,137 377,141 389,148 402,150 414,155 426,157 437,158 461,152 486,136 510,122 521,118 533,111 545,101 558,96 582,91 593,89 605,85 630,79 654,79 677,72 701,73 714,77 737,87 749,92 761,94 786,107 809,115 833,114 845,117 857,116 869,117 893,123 917,137 929,139 941,145 953,149 965,151 1013,152 1037,151 1049,151 1061,154'],
    ['#e9bf3c', '18,161 30,133 42,117 54,90 65,79 77,60 102,88 114,112 125,109 137,113 149,98 161,87 174,64 197,66 209,89 221,103 233,129 246,151 258,159 269,169 281,171 305,165 317,160 330,154 342,156 354,162 365,167 377,177 389,183 402,172 414,159 426,155 437,135 449,117 461,104 473,78 486,57 498,44 510,34 521,38 533,36 545,31 558,34 570,38 582,49 593,78 605,99 617,119 630,128 642,124 654,120 665,112 677,90 689,91 701,82 714,75 725,85 737,104 749,109 761,121 786,132 797,130 809,131 821,127 833,134 857,140 869,138 881,149 893,155 917,172 929,180 941,183 953,181 965,174 977,162 989,155 1001,150 1013,139 1025,131 1037,130 1049,132 1061,134'],
    ['#b832b8', '18,151 42,132 54,122 77,110 90,103 114,101 125,94 137,86 149,85 161,88 186,87 197,89 209,93 233,97 246,108 258,113 269,128 281,137 305,157 330,162 354,165 365,165 377,169 389,168 414,162 437,157 449,150 461,139 473,120 486,106 498,90 510,76 521,71 533,58 545,43 558,38 570,36 582,43 593,58 605,64 617,77 630,83 642,86 654,99 665,105 677,105 689,109 714,98 725,99 737,97 761,102 773,100 786,109 797,117 821,123 833,131 845,134 857,135 869,134 881,138 893,145 905,150 917,156 929,158 941,166 965,169 1001,166 1013,159 1025,153 1037,148 1049,144 1061,143']
];

function line(x, y1, y2, color, width) {
    return `<path d="M${x} ${y1}V${y2}" stroke="${color}" stroke-width="${width}"/>`;
}

function drawLines(id, lines) {
    document.getElementById(id).innerHTML = lines.map(([color, points]) =>
        `<polyline points="${points}" fill="none" stroke="${color}" stroke-width="3" stroke-linejoin="round"/>`
    ).join('');
}

document.getElementById('candles').innerHTML = candles.map((row, i) => {
    const [type, high, top, bottom, low] = row.split(' ');
    const x = FIRST_X + i * STEP;
    const h = Math.max(bottom - top, 1);
    if (type === 'g') {
        return line(x, high, low, GREEN, 2) + `<rect x="${x - 4.5}" y="${top}" width="9" height="${h}" fill="${GREEN}"/>`;
    }
    return line(x, high, top, RED, 2) + line(x, bottom, low, RED, 2) +
        `<rect x="${x - 4.5}" y="${top}" width="9" height="${h}" fill="none" stroke="${RED}" stroke-width="2"/>`;
}).join('');

document.getElementById('volumes').innerHTML = volumes.map((row, i) => {
    const top = Number(row.slice(1));
    const x = FIRST_X + i * STEP;
    if (row[0] === 'g') {
        return `<rect x="${x - 5.5}" y="${top}" width="11" height="${225 - top}" fill="${GREEN}"/>`;
    }
    return `<rect x="${x - 5}" y="${top + 1}" width="10" height="${223 - top}" fill="#fff" stroke="${RED}" stroke-width="2.5"/>`;
}).join('');

// the first ticks fade in
let ticks = '';
for (let i = 14; i < 88; i++) {
    const major = i === 27 || i === 57 || i === 87;
    const color = i < 18 ? ['#e4e4e4', '#ccc', '#b4b4b4', '#999'][i - 14] : '#777';
    ticks += line(FIRST_X + i * STEP, 2, major ? 17 : 11, color, major ? 4 : 2);
}
document.getElementById('ticks').innerHTML = ticks;

drawLines('maLines', maLines);
drawLines('volLines', volLines);
```
